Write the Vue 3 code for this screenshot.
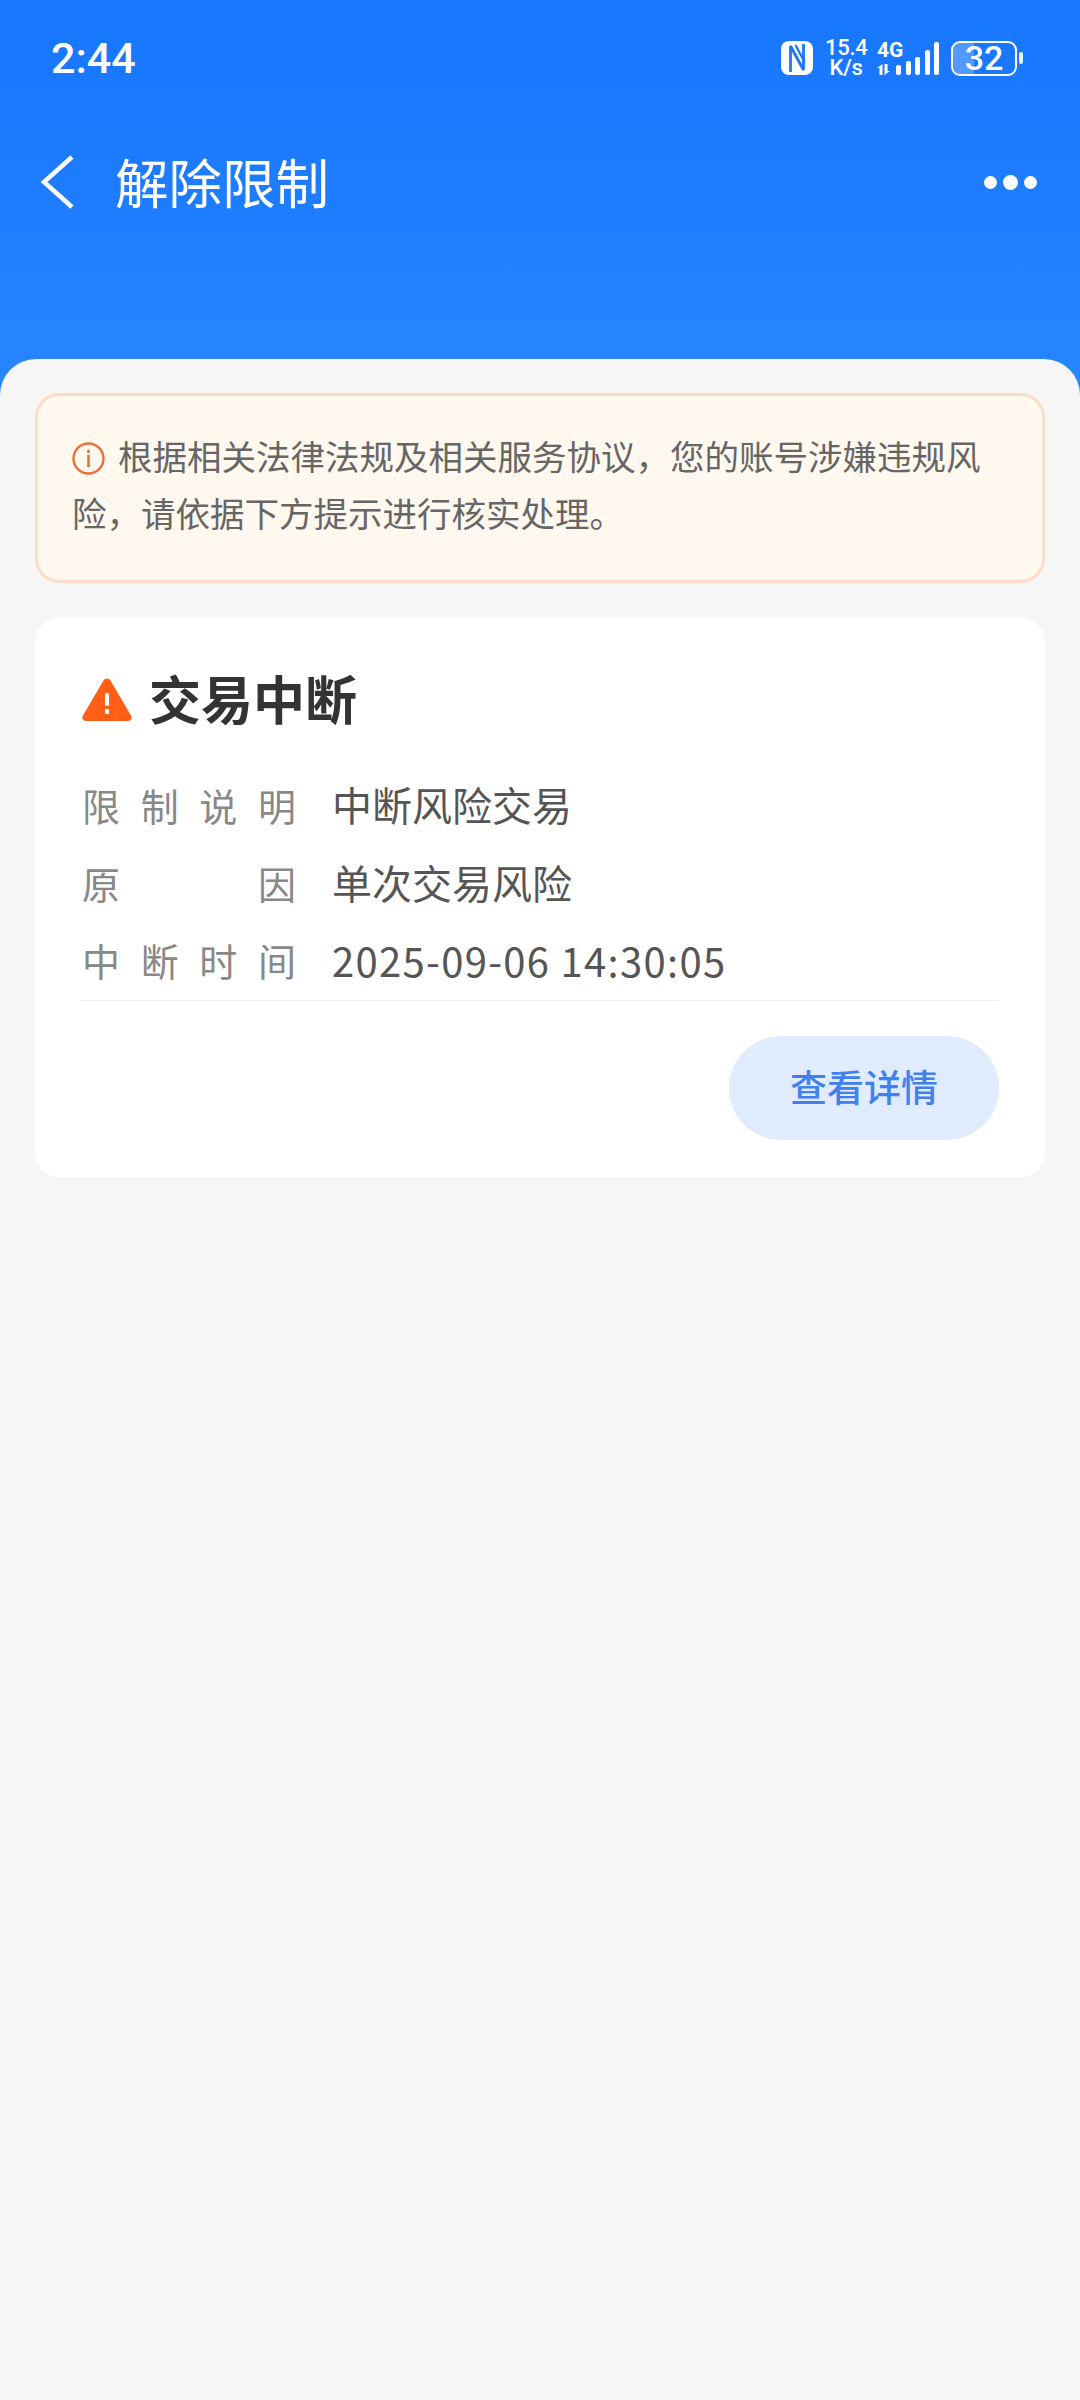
<template>
  <div class="page">
    <div class="header">
      <div class="status-bar">
        <span class="time">2:44</span>
        <div class="status-icons">
          <svg class="nfc" width="32" height="34" viewBox="0 0 32 34">
            <rect width="32" height="34" rx="8" fill="#fff" />
            <path d="M9.500 31V5l13 24V3" fill="none" stroke="#1a78ff" stroke-width="2.800" />
            <path d="M14.500 4l9 17" fill="none" stroke="#1a78ff" stroke-width="2.200" />
          </svg>
          <div class="speed">15.4<br />K/s</div>
          <div class="signal">
            <div class="net">
              <span class="net-label">4G</span>
              <svg width="13" height="11" viewBox="0 0 13 11">
                <path d="M5.500 0v11h-3V4H0zM7.500 0h3v7H13l-5.500 4z" fill="#fff" />
              </svg>
            </div>
            <div class="bars">
              <i v-for="h in bars" :key="h" class="bar" :style="{ height: h + 'px' }"></i>
            </div>
          </div>
          <div class="battery">
            <div class="battery-body">
              <div class="battery-fill"></div>
              <span class="battery-num">32</span>
            </div>
            <i class="battery-tip"></i>
          </div>
        </div>
      </div>
      <div class="nav">
        <svg class="back" width="36" height="56" viewBox="0 0 36 56">
          <path d="M32 3L4 28l28 25" fill="none" stroke="#fff" stroke-width="4.500" />
        </svg>
        <span class="nav-title">解除限制</span>
        <div class="more">
          <i class="dot"></i>
          <i class="dot dot-mid"></i>
          <i class="dot"></i>
        </div>
      </div>
    </div>

    <div class="sheet">
      <div class="notice">
        <svg class="notice-icon" width="33" height="33" viewBox="0 0 33 33">
          <circle cx="16.500" cy="16.500" r="15" fill="none" stroke="#e8703a" stroke-width="2.400" />
          <rect x="15.200" y="8" width="2.600" height="3" fill="#e8703a" />
          <rect x="15.200" y="13" width="2.600" height="12" fill="#e8703a" />
        </svg>根据相关法律法规及相关服务协议，您的账号涉嫌违规风险，请依据下方提示进行核实处理。
      </div>

      <div class="card">
        <div class="card-title">
          <svg class="warn" width="50" height="43" viewBox="0 0 50 43">
            <path d="M21.500 2.500a4 4 0 0 1 7 0l20.500 35a3.500 3.500 0 0 1-3 5.500h-42a3.500 3.500 0 0 1-3-5.500z" fill="#ff5f17" />
            <rect x="23" y="15" width="4" height="13" rx="1.500" fill="#fff" />
            <rect x="23" y="31" width="4" height="5" rx="1" fill="#fff" />
          </svg>
          <span>交易中断</span>
        </div>
        <div class="rows">
          <div v-for="row in rows" :key="row.label" class="row">
            <span class="row-label">{{ row.label }}</span>
            <span class="row-value" :class="{ 'row-date': row.date }">{{ row.value }}</span>
          </div>
        </div>
        <div class="actions">
          <div class="btn">查看详情</div>
        </div>
      </div>
    </div>
  </div>
</template>

<script setup>
const bars = [10, 14, 18, 25, 33]

const rows = [
  { label: '限制说明', value: '中断风险交易' },
  { label: '原因', value: '单次交易风险' },
  { label: '中断时间', value: '2025-09-06 14:30:05', date: true }
]
</script>

<style>
html,
body {
  margin: 0;
  background: #f6f6f6;
}
</style>

<style scoped>
.page {
  width: 1080px;
  min-height: 2400px;
  display: flex;
  flex-direction: column;
  background: #f6f6f6;
  font-family: "Noto Sans CJK SC", "Noto Sans", sans-serif;
}
.header {
  height: 400px;
  box-sizing: border-box;
  padding-top: 20px;
  background: linear-gradient(180deg, #1877ff 0%, #1a79ff 30%, #2685ff 90%);
  color: #fff;
}
.status-bar {
  height: 76px;
  display: flex;
  align-items: center;
  justify-content: space-between;
  padding: 0 57px 0 51px;
}
.time {
  font-family: Roboto, sans-serif;
  font-size: 43px;
  font-weight: 500;
}
.status-icons {
  display: flex;
  align-items: center;
}
.nfc {
  margin-right: 12px;
}
.speed {
  width: 42px;
  font-family: Roboto, sans-serif;
  font-size: 22px;
  font-weight: 500;
  line-height: 20px;
  letter-spacing: -0.300px;
  text-align: center;
  margin-right: 10px;
}
.signal {
  display: flex;
  align-items: flex-end;
  height: 34px;
}
.net {
  width: 26px;
  display: flex;
  flex-direction: column;
  align-items: flex-start;
  gap: 6px;
  margin-right: -7px;
}
.net-label {
  font-family: Roboto, sans-serif;
  font-size: 21px;
  font-weight: 700;
  line-height: 16px;
}
.bars {
  display: flex;
  align-items: flex-end;
  gap: 4.500px;
}
.bar {
  width: 5px;
  border-radius: 2px;
  background: #fff;
}
.battery {
  display: flex;
  align-items: center;
  gap: 2px;
  margin-left: 12px;
}
.battery-body {
  position: relative;
  width: 66px;
  height: 35px;
  box-sizing: border-box;
  border: 2.500px solid #fff;
  border-radius: 9px;
  display: flex;
  align-items: center;
  justify-content: center;
}
.battery-fill {
  position: absolute;
  left: 0;
  top: 0;
  bottom: 0;
  width: 34%;
  border-radius: 6px 0 0 6px;
  background: rgba(255, 255, 255, 0.25);
}
.battery-num {
  position: relative;
  font-family: Roboto, sans-serif;
  font-size: 34px;
  font-weight: 500;
  line-height: 30px;
}
.battery-tip {
  width: 4px;
  height: 12px;
  border-radius: 2px;
  background: rgba(255, 255, 255, 0.9);
}
.nav {
  height: 172px;
  display: flex;
  align-items: center;
  padding: 0 43px 0 40px;
}
.back {
  flex-shrink: 0;
}
.nav-title {
  margin-left: 39px;
  padding-bottom: 3px;
  font-size: 53.500px;
  line-height: 72px;
}
.more {
  margin-left: auto;
  display: flex;
  align-items: center;
  gap: 6px;
}
.dot {
  width: 13px;
  height: 13px;
  border-radius: 50%;
  background: #fff;
}
.dot-mid {
  width: 15px;
  height: 15px;
}
.sheet {
  flex: 1;
  margin-top: -41px;
  padding: 34px 35px;
  border-radius: 36px 36px 0 0;
  background: #f6f6f6;
  display: flex;
  flex-direction: column;
  gap: 35px;
}
.notice {
  height: 190px;
  box-sizing: border-box;
  padding: 31px 35px 0 34px;
  border: 3px solid #fbdcc6;
  border-radius: 24px;
  background: #fff8ef;
  color: #666;
  font-size: 34.500px;
  line-height: 57px;
}
.notice-icon {
  vertical-align: -5px;
  margin-right: 13px;
}
.card {
  padding: 39px 46px 37px 47px;
  border-radius: 24px;
  background: #fff;
}
.card-title {
  height: 80px;
  display: flex;
  align-items: center;
  gap: 17px;
  font-size: 52px;
  font-weight: 700;
  color: #333;
}
.warn {
  margin-top: 4px;
}
.rows {
  margin: 28px 0 0 -2px;
  padding: 0 0 2px 2px;
  border-bottom: 1px solid #eeeeee;
}
.row {
  height: 78px;
  display: flex;
  align-items: center;
}
.row:last-child {
  height: 77px;
}
.row-label {
  width: 214px;
  margin-right: 36px;
  font-size: 38px;
  color: #888;
  text-align-last: justify;
}
.row-value {
  font-size: 40px;
  color: #555;
}
.row-date {
  letter-spacing: 1.300px;
}
.actions {
  display: flex;
  justify-content: flex-end;
  margin-top: 35px;
}
.btn {
  width: 270px;
  height: 104px;
  box-sizing: border-box;
  padding-bottom: 4px;
  border-radius: 52px;
  background: #e0ebfd;
  color: #4180f0;
  font-size: 37px;
  font-weight: 500;
  display: flex;
  align-items: center;
  justify-content: center;
}
</style>
